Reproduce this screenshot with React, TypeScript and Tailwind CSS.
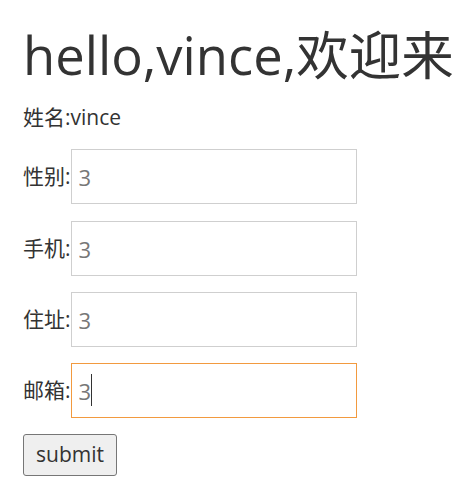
import React from "react";

const font = { fontFamily: '"Open Sans", "Noto Sans CJK SC", sans-serif' };

function Row({ label, focused, gap }: { label: string; focused?: boolean; gap: string }) {
  return (
    <div className={`flex items-center ${gap}`}>
      <label className="text-[21px] text-[#333] whitespace-nowrap">{label}</label>
      {focused ? (
        <div className="relative w-[286px] h-[55px] border border-[#f29a3f] bg-white">
          <input
            defaultValue="3"
            className="w-full h-full px-[7px] text-[22px] text-[#777] bg-transparent outline-none border-0"
            style={font}
          />
          <span className="absolute left-[19px] top-[10px] w-px h-[32px] bg-[#333]" />
        </div>
      ) : (
        <input
          defaultValue="3"
          className="w-[286px] h-[55px] px-[7px] text-[22px] text-[#777] bg-white outline-none border border-[#cfcfcf]"
          style={font}
        />
      )}
    </div>
  );
}

export default function App() {
  return (
    <div className="px-[23px] bg-white min-h-[502px] overflow-hidden text-[#333]" style={font}>
      <h1 className="text-[52.5px] leading-[62px] pt-[24px] whitespace-nowrap font-normal">hello,vince,欢迎来</h1>
      <p className="text-[21px] leading-[30px] mt-[16px]">姓名:vince</p>
      <Row label="性别:" gap="mt-[17px]" />
      <Row label="手机:" gap="mt-[17px]" />
      <Row label="住址:" gap="mt-[16px]" />
      <Row label="邮箱:" gap="mt-[16px]" focused />
      <button
        className="mt-[16px] h-[42px] px-[12px] text-[21px] text-[#333] bg-[#efefef] border border-[#767676] rounded-[3px]"
        style={font}
      >
        submit
      </button>
    </div>
  );
}
